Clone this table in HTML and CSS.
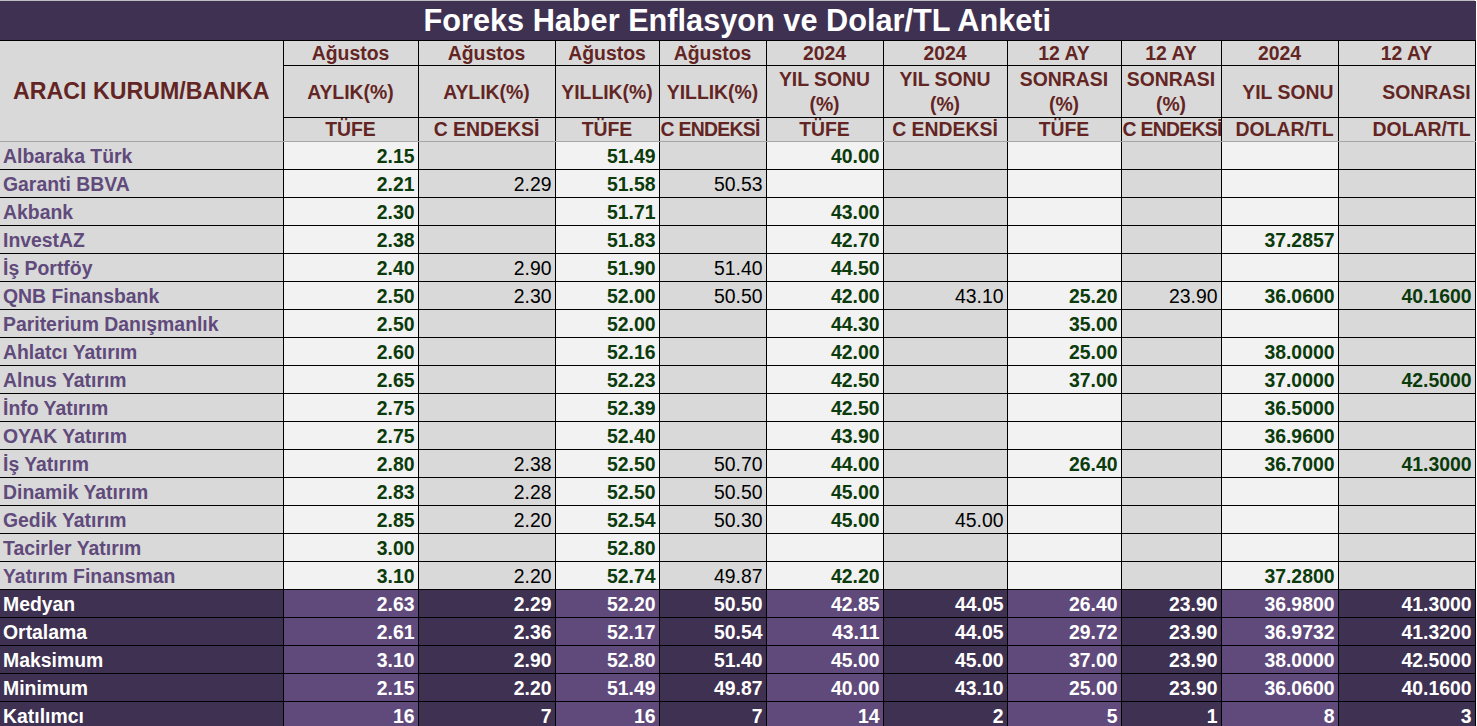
FILE: index.html
```html
<!DOCTYPE html>
<html lang="tr">
<head>
<meta charset="utf-8">
<title>Foreks Haber Enflasyon ve Dolar/TL Anketi</title>
<link rel="stylesheet" href="styles.css">
</head>
<body>
<div class="sheet">
<table class="survey">
<colgroup>
<col class="w-label"><col class="w-c1"><col class="w-c2"><col class="w-c3"><col class="w-c4"><col class="w-c5"><col class="w-c6"><col class="w-c7"><col class="w-c8"><col class="w-c9"><col class="w-c10">
</colgroup>
<thead>
<tr class="title-row"><td colspan="11" class="title">Foreks Haber Enflasyon ve Dolar/TL Anketi</td></tr>
<tr class="h1">
<td rowspan="3" class="corner">ARACI KURUM/BANKA</td>
<td>Ağustos</td><td>Ağustos</td><td>Ağustos</td><td>Ağustos</td><td>2024</td><td>2024</td><td>12 AY</td><td>12 AY</td><td>2024</td><td>12 AY</td>
</tr>
<tr class="h2">
<td>AYLIK(%)</td><td>AYLIK(%)</td><td>YILLIK(%)</td><td>YILLIK(%)</td><td class="wrap">YIL SONU<br>(%)</td><td class="wrap">YIL SONU<br>(%)</td><td class="wrap">SONRASI<br>(%)</td><td class="wrap">SONRASI<br>(%)</td><td class="right">YIL SONU</td><td class="right">SONRASI</td>
</tr>
<tr class="h3">
<td>TÜFE</td><td>C ENDEKSİ</td><td>TÜFE</td><td class="tight">C ENDEKSİ</td><td>TÜFE</td><td>C ENDEKSİ</td><td>TÜFE</td><td class="tight">C ENDEKSİ</td><td class="right">DOLAR/TL</td><td class="right">DOLAR/TL</td>
</tr>
</thead>
<tbody class="data">
<tr><td class="name">Albaraka Türk</td><td class="t">2.15</td><td class="c"></td><td class="t">51.49</td><td class="c"></td><td class="t">40.00</td><td class="c"></td><td class="t"></td><td class="c"></td><td class="t"></td><td class="g"></td></tr>
<tr><td class="name">Garanti BBVA</td><td class="t">2.21</td><td class="c">2.29</td><td class="t">51.58</td><td class="c">50.53</td><td class="t"></td><td class="c"></td><td class="t"></td><td class="c"></td><td class="t"></td><td class="g"></td></tr>
<tr><td class="name">Akbank</td><td class="t">2.30</td><td class="c"></td><td class="t">51.71</td><td class="c"></td><td class="t">43.00</td><td class="c"></td><td class="t"></td><td class="c"></td><td class="t"></td><td class="g"></td></tr>
<tr><td class="name">InvestAZ</td><td class="t">2.38</td><td class="c"></td><td class="t">51.83</td><td class="c"></td><td class="t">42.70</td><td class="c"></td><td class="t"></td><td class="c"></td><td class="t">37.2857</td><td class="g"></td></tr>
<tr><td class="name">İş Portföy</td><td class="t">2.40</td><td class="c">2.90</td><td class="t">51.90</td><td class="c">51.40</td><td class="t">44.50</td><td class="c"></td><td class="t"></td><td class="c"></td><td class="t"></td><td class="g"></td></tr>
<tr><td class="name">QNB Finansbank</td><td class="t">2.50</td><td class="c">2.30</td><td class="t">52.00</td><td class="c">50.50</td><td class="t">42.00</td><td class="c">43.10</td><td class="t">25.20</td><td class="c">23.90</td><td class="t">36.0600</td><td class="g">40.1600</td></tr>
<tr><td class="name">Pariterium Danışmanlık</td><td class="t">2.50</td><td class="c"></td><td class="t">52.00</td><td class="c"></td><td class="t">44.30</td><td class="c"></td><td class="t">35.00</td><td class="c"></td><td class="t"></td><td class="g"></td></tr>
<tr><td class="name">Ahlatcı Yatırım</td><td class="t">2.60</td><td class="c"></td><td class="t">52.16</td><td class="c"></td><td class="t">42.00</td><td class="c"></td><td class="t">25.00</td><td class="c"></td><td class="t">38.0000</td><td class="g"></td></tr>
<tr><td class="name">Alnus Yatırım</td><td class="t">2.65</td><td class="c"></td><td class="t">52.23</td><td class="c"></td><td class="t">42.50</td><td class="c"></td><td class="t">37.00</td><td class="c"></td><td class="t">37.0000</td><td class="g">42.5000</td></tr>
<tr><td class="name">İnfo Yatırım</td><td class="t">2.75</td><td class="c"></td><td class="t">52.39</td><td class="c"></td><td class="t">42.50</td><td class="c"></td><td class="t"></td><td class="c"></td><td class="t">36.5000</td><td class="g"></td></tr>
<tr><td class="name">OYAK Yatırım</td><td class="t">2.75</td><td class="c"></td><td class="t">52.40</td><td class="c"></td><td class="t">43.90</td><td class="c"></td><td class="t"></td><td class="c"></td><td class="t">36.9600</td><td class="g"></td></tr>
<tr><td class="name">İş Yatırım</td><td class="t">2.80</td><td class="c">2.38</td><td class="t">52.50</td><td class="c">50.70</td><td class="t">44.00</td><td class="c"></td><td class="t">26.40</td><td class="c"></td><td class="t">36.7000</td><td class="g">41.3000</td></tr>
<tr><td class="name">Dinamik Yatırım</td><td class="t">2.83</td><td class="c">2.28</td><td class="t">52.50</td><td class="c">50.50</td><td class="t">45.00</td><td class="c"></td><td class="t"></td><td class="c"></td><td class="t"></td><td class="g"></td></tr>
<tr><td class="name">Gedik Yatırım</td><td class="t">2.85</td><td class="c">2.20</td><td class="t">52.54</td><td class="c">50.30</td><td class="t">45.00</td><td class="c">45.00</td><td class="t"></td><td class="c"></td><td class="t"></td><td class="g"></td></tr>
<tr><td class="name">Tacirler Yatırım</td><td class="t">3.00</td><td class="c"></td><td class="t">52.80</td><td class="c"></td><td class="t"></td><td class="c"></td><td class="t"></td><td class="c"></td><td class="t"></td><td class="g"></td></tr>
<tr><td class="name">Yatırım Finansman</td><td class="t">3.10</td><td class="c">2.20</td><td class="t">52.74</td><td class="c">49.87</td><td class="t">42.20</td><td class="c"></td><td class="t"></td><td class="c"></td><td class="t">37.2800</td><td class="g"></td></tr>
</tbody>
<tbody class="stats">
<tr><td class="name">Medyan</td><td class="l">2.63</td><td class="d">2.29</td><td class="l">52.20</td><td class="d">50.50</td><td class="l">42.85</td><td class="d">44.05</td><td class="l">26.40</td><td class="d">23.90</td><td class="l">36.9800</td><td class="d">41.3000</td></tr>
<tr><td class="name">Ortalama</td><td class="l">2.61</td><td class="d">2.36</td><td class="l">52.17</td><td class="d">50.54</td><td class="l">43.11</td><td class="d">44.05</td><td class="l">29.72</td><td class="d">23.90</td><td class="l">36.9732</td><td class="d">41.3200</td></tr>
<tr><td class="name">Maksimum</td><td class="l">3.10</td><td class="d">2.90</td><td class="l">52.80</td><td class="d">51.40</td><td class="l">45.00</td><td class="d">45.00</td><td class="l">37.00</td><td class="d">23.90</td><td class="l">38.0000</td><td class="d">42.5000</td></tr>
<tr><td class="name">Minimum</td><td class="l">2.15</td><td class="d">2.20</td><td class="l">51.49</td><td class="d">49.87</td><td class="l">40.00</td><td class="d">43.10</td><td class="l">25.00</td><td class="d">23.90</td><td class="l">36.0600</td><td class="d">40.1600</td></tr>
<tr><td class="name">Katılımcı</td><td class="l">16</td><td class="d">7</td><td class="l">16</td><td class="d">7</td><td class="l">14</td><td class="d">2</td><td class="l">5</td><td class="d">1</td><td class="l">8</td><td class="d">3</td></tr>
</tbody>
</table>
</div>
</body>
</html>
```

FILE: styles.css
```css
html, body {
  margin: 0;
  padding: 0;
  background: #ffffff;
}

.sheet {
  border-top: 1px solid #bfbfbf;
  width: 1475px;
}

.survey {
  border-collapse: collapse;
  table-layout: fixed;
  width: 1475px;
  font-family: "Liberation Sans", Arial, sans-serif;
  font-weight: bold;
  font-size: 19.4px;
}

.w-label { width: 283px; }
.w-c1 { width: 135px; }
.w-c2 { width: 137px; }
.w-c3 { width: 104px; }
.w-c4 { width: 107px; }
.w-c5 { width: 117px; }
.w-c6 { width: 124px; }
.w-c7 { width: 114px; }
.w-c8 { width: 100px; }
.w-c9 { width: 117px; }
.w-c10 { width: 137px; }

.survey td {
  border: 1px solid #000;
  padding: 0 3px;
  white-space: nowrap;
  overflow: hidden;
  line-height: 22px;
}

/* title */
.title-row td.title {
  height: 39px;
  padding: 0;
  background: #3f3151;
  color: #ffffff;
  font-size: 30.7px;
  line-height: 39px;
  text-align: center;
  border-top: 0;
  border-left: 0;
  border-right: 1px solid #3f3151;
  border-bottom: 1px solid #000;
}

/* header */
thead .h1 td,
thead .h2 td,
thead .h3 td {
  background: #d9d9d9;
  color: #632523;
  text-align: center;
  padding: 0 1px;
}

thead .h1 td { height: 24px; line-height: 24px; }
thead .h2 td { height: 51px; }
thead .h3 td { height: 23px; line-height: 23px; border-bottom: 1px solid #a6a6a6; }

thead td.corner {
  font-size: 23.2px;
  border-left: 0;
  border-bottom: 1px solid #a6a6a6;
}

thead .h2 td.wrap {
  white-space: normal;
  line-height: 25px;
}

thead td.right {
  text-align: right;
  padding-right: 4px;
}

thead td.tight {
  text-align: left;
  padding: 0 0 0 1px;
  letter-spacing: -0.7px;
}

/* data body */
.data td {
  height: 27px;
  text-align: right;
  padding: 0 3px 0 3px;
}

.data td.name {
  text-align: left;
  background: #d9d9d9;
  color: #604a7b;
  border-left: 0;
}

.data td.t {
  background: #f2f2f2;
  color: #0b3a0b;
}

.data td.c {
  background: #d9d9d9;
  color: #000000;
  font-weight: normal;
}

.data td.g {
  background: #d9d9d9;
  color: #0b3a0b;
}

/* stats */
.stats td {
  height: 27px;
  text-align: right;
  color: #ffffff;
  padding: 0 3px;
}

.stats td.name {
  text-align: left;
  background: #3f3151;
  border-left: 0;
}

.stats td.l { background: #604a7b; }
.stats td.d { background: #3f3151; }
```
